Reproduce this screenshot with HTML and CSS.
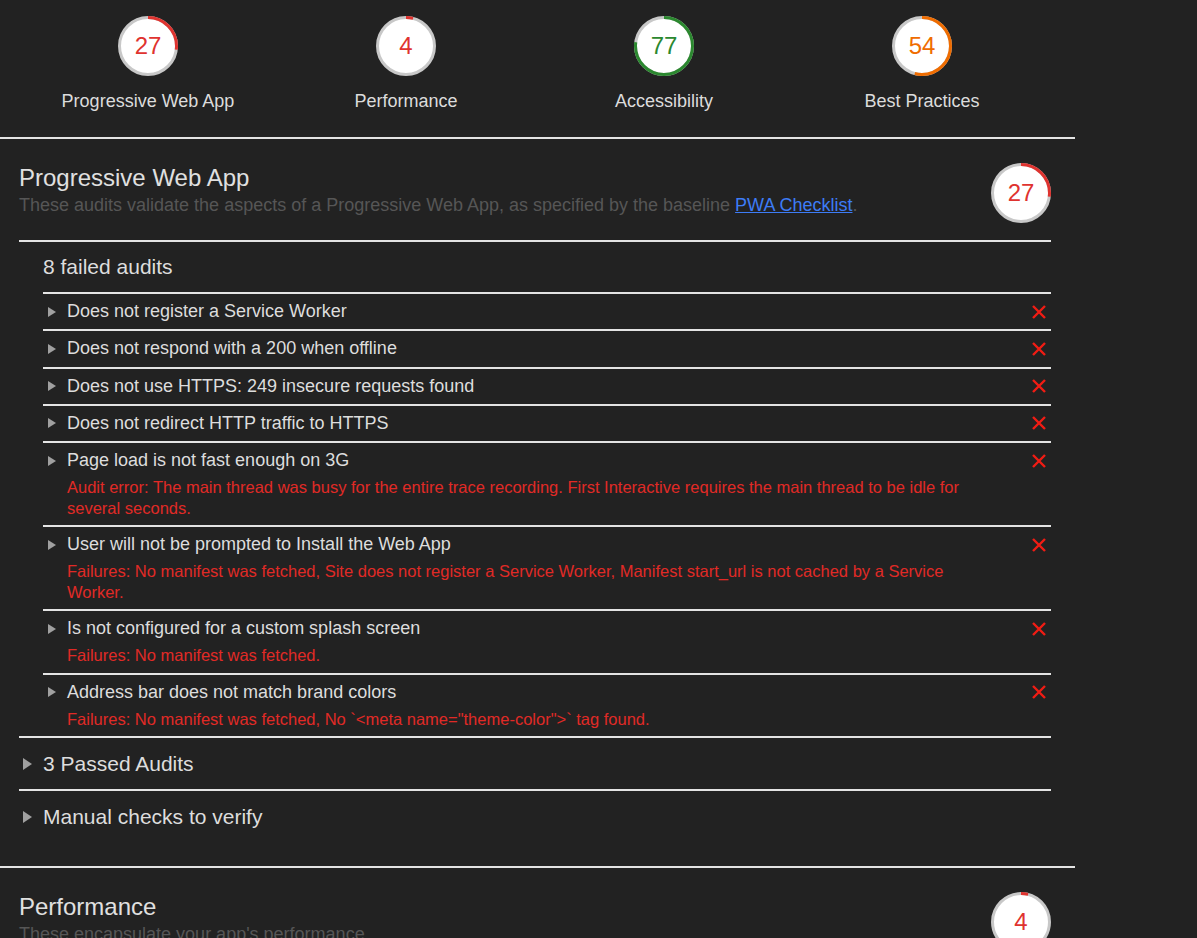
FILE: index.html
```html
<!DOCTYPE html>
<html lang="en">
<head>
<meta charset="utf-8">
<title>Lighthouse Report</title>
<link rel="stylesheet" href="styles.css">
</head>
<body>
<div class="report">
  <div class="scores">
    <div class="score">
      <div class="gauge">
        <svg viewBox="0 0 60 60" width="60" height="60"><circle class="g-base" cx="30" cy="30" r="28.5"/><circle class="g-arc fail" cx="30" cy="30" r="28.5" stroke-dasharray="48.35 179.07" transform="rotate(-90 30 30)"/></svg>
        <span class="g-num fail-t">27</span>
      </div>
      <div class="score-label">Progressive Web App</div>
    </div>
    <div class="score">
      <div class="gauge">
        <svg viewBox="0 0 60 60" width="60" height="60"><circle class="g-base" cx="30" cy="30" r="28.5"/><circle class="g-arc fail" cx="30" cy="30" r="28.5" stroke-dasharray="7.16 179.07" transform="rotate(-90 30 30)"/></svg>
        <span class="g-num fail-t">4</span>
      </div>
      <div class="score-label">Performance</div>
    </div>
    <div class="score">
      <div class="gauge">
        <svg viewBox="0 0 60 60" width="60" height="60"><circle class="g-base" cx="30" cy="30" r="28.5"/><circle class="g-arc pass" cx="30" cy="30" r="28.5" stroke-dasharray="137.88 179.07" transform="rotate(-90 30 30)"/></svg>
        <span class="g-num pass-t">77</span>
      </div>
      <div class="score-label">Accessibility</div>
    </div>
    <div class="score">
      <div class="gauge">
        <svg viewBox="0 0 60 60" width="60" height="60"><circle class="g-base" cx="30" cy="30" r="28.5"/><circle class="g-arc avg" cx="30" cy="30" r="28.5" stroke-dasharray="96.70 179.07" transform="rotate(-90 30 30)"/></svg>
        <span class="g-num avg-t">54</span>
      </div>
      <div class="score-label">Best Practices</div>
    </div>
  </div>

  <section class="category">
    <div class="cat-header">
      <div class="cat-text">
        <div class="cat-title">Progressive Web App</div>
        <div class="cat-desc">These audits validate the aspects of a Progressive Web App, as specified by the baseline <a href="#">PWA Checklist</a>.</div>
      </div>
      <div class="gauge">
        <svg viewBox="0 0 60 60" width="60" height="60"><circle class="g-base" cx="30" cy="30" r="28.5"/><circle class="g-arc fail" cx="30" cy="30" r="28.5" stroke-dasharray="48.35 179.07" transform="rotate(-90 30 30)"/></svg>
        <span class="g-num fail-t">27</span>
      </div>
    </div>

    <div class="group">
      <div class="group-title plain">8 failed audits</div>
      <div class="audits">
        <div class="audit">
          <span class="tri"><svg width="8" height="10" viewBox="0 0 8 10"><polygon points="0,0 8,5 0,10"/></svg></span>
          <div class="audit-body"><div class="audit-title">Does not register a Service Worker</div></div>
          <span class="x"><svg width="16" height="16" viewBox="0 0 16 16"><path d="M2 2L14 14M14 2L2 14"/></svg></span>
        </div>
        <div class="audit">
          <span class="tri"><svg width="8" height="10" viewBox="0 0 8 10"><polygon points="0,0 8,5 0,10"/></svg></span>
          <div class="audit-body"><div class="audit-title">Does not respond with a 200 when offline</div></div>
          <span class="x"><svg width="16" height="16" viewBox="0 0 16 16"><path d="M2 2L14 14M14 2L2 14"/></svg></span>
        </div>
        <div class="audit">
          <span class="tri"><svg width="8" height="10" viewBox="0 0 8 10"><polygon points="0,0 8,5 0,10"/></svg></span>
          <div class="audit-body"><div class="audit-title">Does not use HTTPS: 249 insecure requests found</div></div>
          <span class="x"><svg width="16" height="16" viewBox="0 0 16 16"><path d="M2 2L14 14M14 2L2 14"/></svg></span>
        </div>
        <div class="audit">
          <span class="tri"><svg width="8" height="10" viewBox="0 0 8 10"><polygon points="0,0 8,5 0,10"/></svg></span>
          <div class="audit-body"><div class="audit-title">Does not redirect HTTP traffic to HTTPS</div></div>
          <span class="x"><svg width="16" height="16" viewBox="0 0 16 16"><path d="M2 2L14 14M14 2L2 14"/></svg></span>
        </div>
        <div class="audit">
          <span class="tri"><svg width="8" height="10" viewBox="0 0 8 10"><polygon points="0,0 8,5 0,10"/></svg></span>
          <div class="audit-body">
            <div class="audit-title">Page load is not fast enough on 3G</div>
            <div class="audit-detail">Audit error: The main thread was busy for the entire trace recording. First Interactive requires the main thread to be idle for several seconds.</div>
          </div>
          <span class="x"><svg width="16" height="16" viewBox="0 0 16 16"><path d="M2 2L14 14M14 2L2 14"/></svg></span>
        </div>
        <div class="audit">
          <span class="tri"><svg width="8" height="10" viewBox="0 0 8 10"><polygon points="0,0 8,5 0,10"/></svg></span>
          <div class="audit-body">
            <div class="audit-title">User will not be prompted to Install the Web App</div>
            <div class="audit-detail">Failures: No manifest was fetched, Site does not register a Service Worker, Manifest start_url is not cached by a Service Worker.</div>
          </div>
          <span class="x"><svg width="16" height="16" viewBox="0 0 16 16"><path d="M2 2L14 14M14 2L2 14"/></svg></span>
        </div>
        <div class="audit">
          <span class="tri"><svg width="8" height="10" viewBox="0 0 8 10"><polygon points="0,0 8,5 0,10"/></svg></span>
          <div class="audit-body">
            <div class="audit-title">Is not configured for a custom splash screen</div>
            <div class="audit-detail">Failures: No manifest was fetched.</div>
          </div>
          <span class="x"><svg width="16" height="16" viewBox="0 0 16 16"><path d="M2 2L14 14M14 2L2 14"/></svg></span>
        </div>
        <div class="audit">
          <span class="tri"><svg width="8" height="10" viewBox="0 0 8 10"><polygon points="0,0 8,5 0,10"/></svg></span>
          <div class="audit-body">
            <div class="audit-title">Address bar does not match brand colors</div>
            <div class="audit-detail">Failures: No manifest was fetched, No `&lt;meta name="theme-color"&gt;` tag found.</div>
          </div>
          <span class="x"><svg width="16" height="16" viewBox="0 0 16 16"><path d="M2 2L14 14M14 2L2 14"/></svg></span>
        </div>
      </div>
    </div>

    <div class="group">
      <div class="group-title"><span class="tri"><svg width="9" height="12" viewBox="0 0 9 12"><polygon points="0,0 9,6 0,12"/></svg></span>3 Passed Audits</div>
    </div>
    <div class="group">
      <div class="group-title"><span class="tri"><svg width="9" height="12" viewBox="0 0 9 12"><polygon points="0,0 9,6 0,12"/></svg></span>Manual checks to verify</div>
    </div>
  </section>

  <section class="category">
    <div class="cat-header">
      <div class="cat-text">
        <div class="cat-title">Performance</div>
        <div class="cat-desc">These encapsulate your app's performance.</div>
      </div>
      <div class="gauge">
        <svg viewBox="0 0 60 60" width="60" height="60"><circle class="g-base" cx="30" cy="30" r="28.5"/><circle class="g-arc fail" cx="30" cy="30" r="28.5" stroke-dasharray="7.16 179.07" transform="rotate(-90 30 30)"/></svg>
        <span class="g-num fail-t">4</span>
      </div>
    </div>
  </section>
</div>
</body>
</html>
```

FILE: styles.css
```css
html, body {
  margin: 0;
  padding: 0;
  background: #222222;
}
body {
  font-family: "Liberation Sans", Arial, sans-serif;
  color: #dddddd;
  overflow: hidden;
  height: 938px;
}
.report {
  width: 1075px;
}
.scores {
  display: grid;
  grid-template-columns: repeat(4, 258px);
  padding: 16px 24px 25px 19px;
}
.score {
  display: flex;
  flex-direction: column;
  align-items: center;
}
.score-label {
  margin-top: 14px;
  font-size: 18px;
  line-height: 22px;
  color: #dcdcdc;
}
.gauge {
  display: grid;
  width: 60px;
  height: 60px;
  flex: none;
}
.gauge svg,
.gauge .g-num {
  grid-area: 1 / 1;
}
.gauge .g-num {
  display: flex;
  align-items: center;
  justify-content: center;
  font-size: 24px;
  line-height: 60px;
}
.g-base {
  fill: #ffffff;
  stroke: #c8c8c8;
  stroke-width: 3;
}
.g-arc {
  fill: none;
  stroke-width: 3;
}
.g-arc.fail { stroke: #df332f; }
.g-arc.pass { stroke: #2b882f; }
.g-arc.avg { stroke: #ef6c00; }
.fail-t { color: #df332f; }
.pass-t { color: #2b882f; }
.avg-t { color: #ef6c00; }

.category {
  border-top: 2px solid #e4e4e4;
  padding: 0 24px 24px 19px;
}
.cat-header {
  display: flex;
  align-items: flex-start;
  justify-content: space-between;
  padding: 24px 0 17px;
}
.cat-title {
  font-size: 24px;
  line-height: 30px;
  color: #e0e0e0;
}
.cat-desc {
  font-size: 18px;
  line-height: 24px;
  color: #565656;
}
.cat-desc a {
  color: #3d7cf6;
  text-decoration: underline;
}
.group {
  border-top: 2px solid #e4e4e4;
}
.group-title {
  display: flex;
  align-items: center;
  font-size: 21px;
  line-height: 21px;
  padding: 15px 0;
  color: #dddddd;
}
.group-title.plain {
  padding: 14px 0 15px 24px;
}
.group-title .tri {
  width: 24px;
  padding-left: 4px;
  box-sizing: border-box;
}
.audits {
  margin-left: 24px;
}
.audit {
  display: flex;
  align-items: flex-start;
  border-top: 2px solid #e4e4e4;
  padding: 8px 4px 8px 0;
}
.tri {
  display: flex;
  align-items: center;
  flex: none;
}
.tri svg {
  fill: #a0a0a0;
}
.audit > .tri {
  width: 24px;
  height: 19.25px;
  padding-left: 5px;
  box-sizing: border-box;
}
.audit-body {
  flex: 1;
  margin-right: 46px;
}
.audit-title {
  font-size: 18px;
  line-height: 19.25px;
  color: #dddddd;
}
.audit-detail {
  margin-top: 7px;
  margin-bottom: -1.25px;
  font-size: 16.5px;
  line-height: 20.5px;
  color: #e02a26;
}
.x {
  display: flex;
  align-items: center;
  height: 19.25px;
  flex: none;
}
.x svg {
  stroke: #f01c14;
  stroke-width: 2.4;
  fill: none;
}
```
